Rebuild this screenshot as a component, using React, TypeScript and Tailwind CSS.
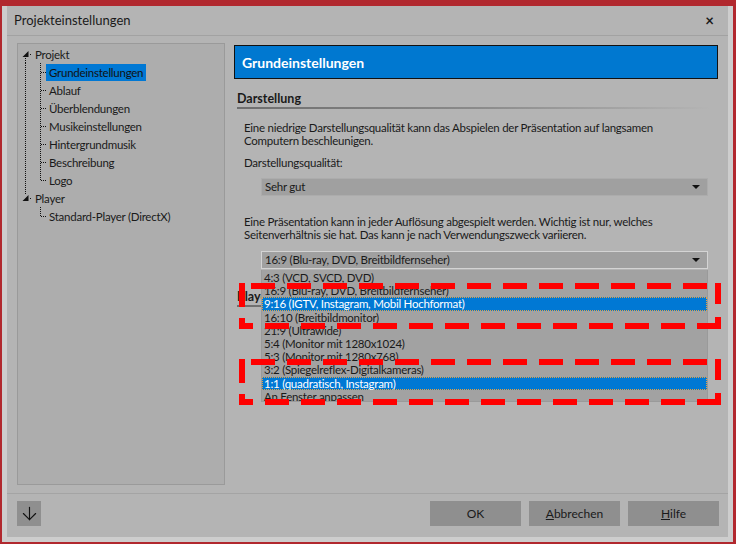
import React from 'react';
import { ArrowDown } from 'lucide-react';

type Node = { label: string; kind: 'root' | 'rootLast' | 'child' | 'leaf'; last?: boolean; selected?: boolean };

const TREE: Node[] = [
  { label: 'Projekt', kind: 'root' },
  { label: 'Grundeinstellungen', kind: 'child', selected: true },
  { label: 'Ablauf', kind: 'child' },
  { label: 'Überblendungen', kind: 'child' },
  { label: 'Musikeinstellungen', kind: 'child' },
  { label: 'Hintergrundmusik', kind: 'child' },
  { label: 'Beschreibung', kind: 'child' },
  { label: 'Logo', kind: 'child', last: true },
  { label: 'Player', kind: 'rootLast' },
  { label: 'Standard-Player (DirectX)', kind: 'leaf', last: true },
];

const RATIOS = [
  '4:3 (VCD, SVCD, DVD)',
  '16:9 (Blu-ray, DVD, Breitbildfernseher)',
  '9:16 (IGTV, Instagram, Mobil Hochformat)',
  '16:10 (Breitbildmonitor)',
  '21:9 (Ultrawide)',
  '5:4 (Monitor mit 1280x1024)',
  '5:3 (Monitor mit 1280x768)',
  '3:2 (Spiegelreflex-Digitalkameras)',
  '1:1 (quadratisch, Instagram)',
  'An Fenster anpassen',
];
const HIGHLIGHT = [2, 8];

const dot = { stroke: '#111', strokeWidth: 1, strokeDasharray: '1 1', shapeRendering: 'crispEdges' as const };

function Connector({ node }: { node: Node }) {
  if (node.kind === 'root' || node.kind === 'rootLast') {
    return (
      <svg width="14" height="18" className="shrink-0">
        {node.kind === 'root' ? <line x1="7.5" y1="13" x2="7.5" y2="18" {...dot} /> : <line x1="7.5" y1="0" x2="7.5" y2="6" {...dot} />}
        <polygon points="10.5,6 10.5,12 4.5,12" fill="#111" />
        <line x1="12" y1="9.5" x2="14" y2="9.5" {...dot} />
      </svg>
    );
  }
  return (
    <svg width="28" height="18" className="shrink-0">
      {node.kind === 'child' && <line x1="7.5" y1="0" x2="7.5" y2="18" {...dot} />}
      <line x1="22.5" y1="0" x2="22.5" y2={node.last ? 10 : 18} {...dot} />
      <line x1="23" y1="9.5" x2="28" y2="9.5" {...dot} />
    </svg>
  );
}

function Dashes({ x2, y, from }: { x2: number; y: number; from: number }) {
  const out: React.ReactNode[] = [];
  for (let x = from; x + 24 <= x2; x += 36) out.push(<rect key={x} x={x} y={y} width={24} height={6} />);
  return <>{out}</>;
}

// red dashed annotation frame drawn over the dialog
function Box({ x0, y0, x1, y1 }: { x0: number; y0: number; x1: number; y1: number }) {
  return (
    <g fill="#ff0000">
      <Dashes x2={x1 - 12} y={y0} from={x0 + 12} />
      <Dashes x2={x1 - 30} y={y1 - 6} from={x0 + 26} />
      <rect x={x0} y={y0} width={6} height={24} />
      <rect x={x1 - 6} y={y0} width={6} height={21} />
      <rect x={x0} y={y1 - 11} width={6} height={11} />
      <rect x={x0} y={y1 - 6} width={14} height={6} />
      <rect x={x1 - 6} y={y1 - 12} width={6} height={12} />
      <rect x={x1 - 24} y={y1 - 6} width={24} height={6} />
    </g>
  );
}

function Caret() {
  return <span className="w-0 h-0 border-l-[4px] border-r-[4px] border-t-[4px] border-l-transparent border-r-transparent border-t-[#111]" />;
}

export default function App() {
  return (
    <div className="w-[736px] h-[544px] bg-[#b1282e] pt-[6px] pl-[2px] pr-[3px] pb-[2px] font-['Lato',sans-serif] text-[#1a1a1a] relative overflow-hidden">
      <div className="h-full bg-[#cdcdcd] px-[5px] pb-[5px]">
        <div className="h-full bg-[#b4b4b4] flex flex-col">
          <div className="h-[30px] border-b border-[#a2a2a2] flex items-center justify-between pl-[7px] pr-[14px] text-[13px]">
            <span>Projekteinstellungen</span>
            <span className="font-bold text-[15px] leading-none">×</span>
          </div>

          <div className="h-[458px] flex pt-[7px] pl-[10px] border-b border-[#a4a4a4]">
            <div className="w-[208px] h-[442px] bg-[#adadad] border border-[#9a9a9a] pt-[1px] text-[11.5px] tracking-[-0.25px]">
              {TREE.map(n => (
                <div key={n.label} className="h-[18px] flex items-center">
                  <Connector node={n} />
                  <span className={`px-[3px] h-[17px] leading-[17px] ${n.selected ? 'bg-[#0078d4] text-[#111]' : ''}`}>{n.label}</span>
                </div>
              ))}
            </div>

            <div className="w-[487px] ml-[8px] relative text-[11.5px] tracking-[-0.25px]">
              <div className="ml-[1px] w-[484px] mt-[2px] h-[34px] bg-[#0078d0] border border-[#111] flex items-center pl-[7px] text-white font-bold text-[14px] tracking-normal">Grundeinstellungen</div>

              <div className="pl-[4px] mt-[12px] h-[16px] leading-[16px] font-bold text-[12.5px] tracking-normal">Darstellung</div>
              <div className="ml-[4px] w-[473px] h-[2px] bg-gradient-to-r from-[#6e6e6e] via-[#8a8a8a] to-transparent" />

              <p className="pl-[11px] mt-[12px] leading-[13px]">Eine niedrige Darstellungsqualität kann das Abspielen der Präsentation auf langsamen<br />Computern beschleunigen.</p>
              <p className="pl-[11px] mt-[9px] leading-[13px]">Darstellungsqualität:</p>
              <div className="ml-[28px] mt-[9px] w-[447px] h-[18px] bg-[#a0a0a0] border border-[#acacac] flex items-center justify-between pl-[3px] pr-[7px]">
                <span>Sehr gut</span><Caret />
              </div>

              <p className="pl-[11px] mt-[19px] leading-[13px]">Eine Präsentation kann in jeder Auflösung abgespielt werden. Wichtig ist nur, welches<br />Seitenverhältnis sie hat. Das kann je nach Verwendungszweck variieren.</p>
              <div className="ml-[28px] mt-[10px] w-[447px] h-[18px] bg-[#a0a0a0] border border-[#d4d4d4] flex items-center justify-between pl-[3px] pr-[7px]">
                <span>16:9 (Blu-ray, DVD, Breitbildfernseher)</span><Caret />
              </div>

              <div className="pl-[4px] mt-[20px] h-[16px] leading-[16px] font-bold text-[12.5px] tracking-normal">Player</div>
              <div className="ml-[4px] w-[473px] h-[2px] bg-gradient-to-r from-[#6e6e6e] via-[#8a8a8a] to-transparent" />

              <div className="absolute left-[28px] top-[227px] w-[447px] h-[132px] bg-[#a2a2a2] border-x border-b border-[#9a9a9a] overflow-hidden pt-[1px]">
                {RATIOS.map((r, i) => (
                  <div key={r} className={`h-[13.2px] leading-[12px] ${HIGHLIGHT.includes(i) ? 'bg-[#0078d4] text-white border border-dotted border-[#e8a040] pl-[1px]' : 'border border-transparent pl-[1px]'}`}>{r}</div>
                ))}
              </div>
            </div>
          </div>

          <div className="flex-1 flex items-start pt-[7px] pl-[10px] pr-[9px] text-[12px]">
            <button className="w-[24px] h-[25px] bg-[#8f8f8f] flex items-center justify-center"><ArrowDown size={21} strokeWidth={1.3} color="#111" /></button>
            <div className="ml-auto flex gap-[8px]">
              <button className="w-[91px] h-[25px] bg-[#8f8f8f]">OK</button>
              <button className="w-[91px] h-[25px] bg-[#8f8f8f]"><u>A</u>bbrechen</button>
              <button className="w-[91px] h-[25px] bg-[#8f8f8f]"><u>H</u>ilfe</button>
            </div>
          </div>
        </div>
      </div>

      <svg className="absolute left-0 top-0 pointer-events-none" width="736" height="544">
        <Box x0={239} y0={283} x1={721} y1={329} />
        <Box x0={239} y0={359} x1={721} y1={405} />
      </svg>
    </div>
  );
}
